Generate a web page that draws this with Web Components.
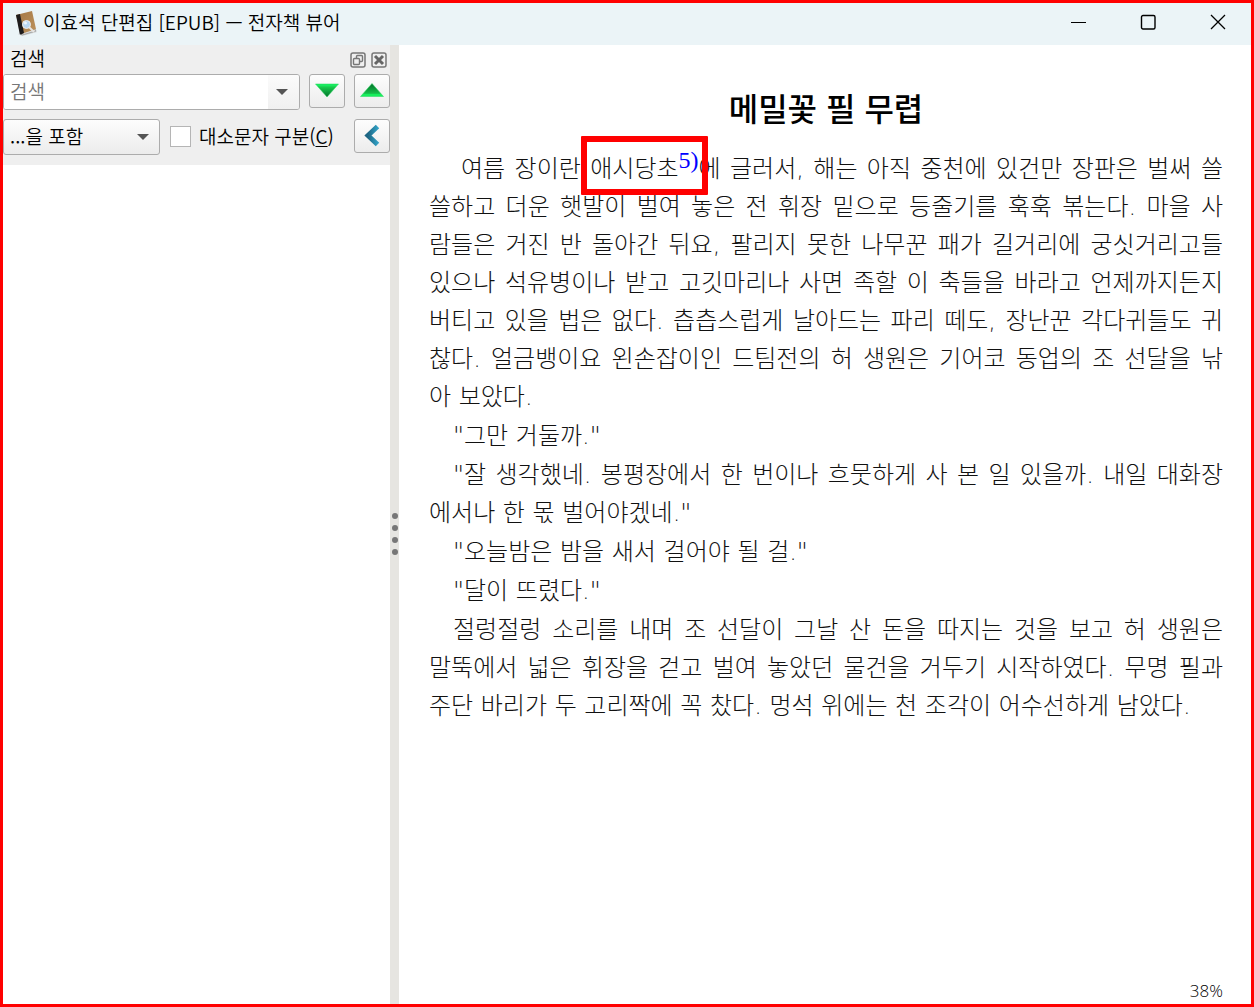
<!DOCTYPE html>
<html lang="ko">
<head>
<meta charset="utf-8">
<title>이효석 단편집 [EPUB] — 전자책 뷰어</title>
<style>
html,body{margin:0;height:100%}
body{font-family:"Open Sans","Noto Sans CJK KR",sans-serif;color:#000}
</style>
</head>
<body>
<viewer-window></viewer-window>
<script>
const define = (name, html) => customElements.define(name, class extends HTMLElement {
  constructor(){ super(); this.attachShadow({mode:'open'}).innerHTML = html; }
});

define('title-bar', `
<style>
:host{display:flex;align-items:center;height:42px;background:#ebf4f7;font:350 19px "Noto Sans CJK KR",sans-serif;padding-left:12px}
.icon{width:24px;height:26px;margin-right:4px}
h1{font:inherit;margin:0;flex:1;line-height:26px;padding-bottom:4px}
.caps{display:flex;padding-bottom:4px}
button{border:0;background:none;padding:0;width:70px;height:36px;display:grid;place-items:center}
.caps{margin-right:-2px}
.caps svg{width:16px;height:16px;fill:none;stroke:#000}
</style>
<svg class="icon" viewBox="0 0 24 26" aria-hidden="true">
<defs><linearGradient id="c" x1="0" y1="0" x2="1" y2="1"><stop offset="0" stop-color="#a47745"/><stop offset="1" stop-color="#bd935d"/></linearGradient></defs>
<path d="M3 23L20 19l2 2-15 4z" fill="#bbb" opacity=".6"/>
<path d="M5 22l15-4 1 2-14 4z" fill="#ddd" stroke="#777" stroke-width=".5"/>
<path d="M1 4L17 0l4 18-15 5z" fill="url(#c)"/>
<path d="M1 4l4-1 4 19-3 1.500q-1 .3-1.400-1z" fill="#1e1c1c"/>
<path d="M14 16l5 5" stroke="#e6e3df" stroke-width="2"/>
<circle cx="11.500" cy="13.500" r="4" fill="#b9d8f3" stroke="#eee" stroke-width="1"/>
<circle cx="10.500" cy="12" r="1.500" fill="#eef7ff"/>
</svg>
<h1><slot></slot></h1>
<div class="caps">
<button aria-label="최소화"><svg viewBox="0 0 16 16"><path d="M1 8.500h15"/></svg></button>
<button aria-label="최대화"><svg viewBox="0 0 16 16"><rect x="1.500" y="1.500" width="13.500" height="13.500" rx="1.500" stroke-width="1.400"/></svg></button>
<button aria-label="닫기"><svg viewBox="0 0 16 16"><path d="M1 1l14 14M15 1L1 15" stroke-width="1.300"/></svg></button>
</div>`);

define('tool-button', `
<style>
:host{display:block;width:36px;flex:none}
button{width:100%;height:34px;box-sizing:border-box;padding:0;border:1px solid #acacac;border-radius:3px;background:linear-gradient(#fdfdfd,#ececec);display:grid;place-items:center}
::slotted(svg){width:24px;height:24px;display:block}
</style><button><slot></slot></button>`);

define('search-panel', `
<style>
:host{display:flex;flex-direction:column;box-sizing:border-box;background:#efefef;font:350 19px "Noto Sans CJK KR",sans-serif}
header{display:flex;align-items:center;height:29px;padding:0 3px 0 7px;gap:5px}
h2{font:inherit;margin:0;flex:1;line-height:26px;padding-bottom:3px}
header button{width:16px;height:16px;padding:0;border:0;background:none}
header svg{display:block;width:16px;height:16px;fill:none;stroke:#777}
.row{display:flex;align-items:flex-start;gap:9px}
.combo{flex:1;min-width:0;display:flex;height:36px;box-sizing:border-box;border:1px solid #acacac;border-radius:3px;background:#f5f5f5;overflow:hidden}
.combo input{flex:1;min-width:0;border:0;background:#fff;padding:0 0 3px 6px;font:inherit;outline:0}
.combo input::placeholder{color:#777;opacity:1}
.combo button{width:31px;border:0;padding:0 4px 0 0;background:linear-gradient(#fbfbfb,#f0f0f0);display:grid;place-items:center}
.arrow{width:12px;height:6px;fill:#555}
.pick{display:grid;width:157px;height:36px}
.pick>*{grid-area:1/1}
select{appearance:none;font:inherit;color:#000;border:1px solid #acacac;border-radius:3px;padding:0 0 3px 6px;background:linear-gradient(#fdfdfd,#ececec);margin:0}
.pick svg{place-self:center end;margin-right:11px;pointer-events:none}
input[type=checkbox]{appearance:none;width:21px;height:21px;margin:7px 0 0;background:#fff;border:1px solid #b5b5b5;flex:none}
label{flex:1;line-height:33px;white-space:nowrap}
u{text-underline-offset:2px;text-decoration-thickness:1px}
.second{padding-top:9px;gap:10px}
.second label{margin-left:-2px}
.results{flex:1;background:#fff;margin-top:10px}
</style>
<header><h2>검색</h2>
<button aria-label="분리"><svg viewBox="0 0 16 16"><rect x="1" y="1" width="14" height="14" rx="2" stroke-width="1.500"/><rect x="6.500" y="3.500" width="6" height="6" rx="1" stroke-width="1.400"/><rect x="3.500" y="6.500" width="6" height="6" rx="1" fill="#efefef" stroke-width="1.400"/></svg></button>
<button aria-label="닫기"><svg viewBox="0 0 16 16"><rect x="1" y="1" width="14" height="14" rx="2" stroke-width="1.500"/><path d="M4 4l8 8M12 4l-8 8" stroke="#666" stroke-width="3"/></svg></button>
</header>
<div class="row">
<div class="combo"><input type="text" placeholder="검색" aria-label="검색"><button aria-label="검색 기록"><svg class="arrow" viewBox="0 0 12 6"><path d="M0 0h12L6 6z"/></svg></button></div>
<tool-button><svg viewBox="0 0 24 24"><defs><linearGradient id="dn" x1="0" y1="0" x2="0" y2="1"><stop offset=".1" stop-color="#18ee60"/><stop offset=".25" stop-color="#18c94c"/><stop offset="1" stop-color="#04702b"/></linearGradient></defs><path d="M0.500 5h23L12 18z" fill="url(#dn)" stroke="#27d75f" stroke-width=".5"/></svg></tool-button>
<tool-button><svg viewBox="0 0 24 24"><defs><linearGradient id="up" x1="0" y1="0" x2="0" y2="1"><stop offset="0" stop-color="#04702b"/><stop offset=".75" stop-color="#15bd48"/><stop offset=".85" stop-color="#16f05c"/></linearGradient></defs><path d="M0.500 17.500h23L12 4.500z" fill="url(#up)" stroke="#27d75f" stroke-width=".5"/></svg></tool-button>
</div>
<div class="row second">
<div class="pick"><select aria-label="검색 방식"><option>...을 포함</option></select><svg class="arrow" viewBox="0 0 12 6"><path d="M0 0h12L6 6z"/></svg></div>
<input type="checkbox" id="case"><label for="case">대소문자 구분(<u>C</u>)</label>
<tool-button><svg viewBox="0 0 24 24"><defs><linearGradient id="bk"><stop offset="0" stop-color="#1d6583"/><stop offset="1" stop-color="#319fc3"/></linearGradient></defs><path d="M17.500 2.500L8 11.500l9.500 9" fill="none" stroke="url(#bk)" stroke-width="5"/></svg></tool-button>
</div>
<div class="results"></div>`);

define('split-handle', `
<style>
:host{display:flex;flex-direction:column;align-items:center;justify-content:center;gap:6px;background:#e6e5e1;padding-top:18px;box-sizing:border-box}
i{width:6px;height:6px;border-radius:50%;background:#777}
</style><i></i><i></i><i></i><i></i>`);

define('book-paragraph', `
<style>
:host{display:block;text-indent:24px}
::slotted(span){display:block;text-align:justify;text-align-last:justify;text-justify:inter-word;white-space:nowrap}
::slotted(span:not(:first-child)){text-indent:0}
::slotted(span:last-child){text-align-last:left}
</style><slot></slot>`);

define('foot-note', `
<style>
:host{position:relative;text-indent:0}
:host::after{content:"";position:absolute;inset:-19px -9px -12px;border:6px solid #f00;border-radius:1px}
a{color:#00f;text-decoration:none;font-family:"Liberation Serif",serif;font-weight:400;position:relative;bottom:9px;line-height:0}
</style><slot></slot><a href="#note5">5)</a>`);

define('book-page', `
<style>
:host{display:flex;flex-direction:column;box-sizing:border-box;background:#fff;padding:38px 28px 0 30px}
h2{margin:0 0 19px;text-align:center;font:500 32px/48px "Noto Sans CJK KR",sans-serif}
article{flex:1;display:flex;flex-direction:column;gap:1px;color:#111;font:300 24px/38px "DejaVu Sans","Noto Sans CJK KR",sans-serif}
footer{text-align:right;font:300 17px/26px "Open Sans",sans-serif}
.wide{text-indent:32px}
</style>
<h2>메밀꽃 필 무렵</h2>
<article>
<book-paragraph class="wide"><span>여름 장이란 <foot-note>애시당초</foot-note>에 글러서, 해는 아직 중천에 있건만 장판은 벌써 쓸</span><span>쓸하고 더운 햇발이 벌여 놓은 전 휘장 밑으로 등줄기를 훅훅 볶는다. 마을 사</span><span>람들은 거진 반 돌아간 뒤요, 팔리지 못한 나무꾼 패가 길거리에 궁싯거리고들</span><span>있으나 석유병이나 받고 고깃마리나 사면 족할 이 축들을 바라고 언제까지든지</span><span>버티고 있을 법은 없다. 츱츱스럽게 날아드는 파리 떼도, 장난꾼 각다귀들도 귀</span><span>찮다. 얼금뱅이요 왼손잡이인 드팀전의 허 생원은 기어코 동업의 조 선달을 낚</span><span>아 보았다.</span></book-paragraph>
<book-paragraph><span>"그만 거둘까."</span></book-paragraph>
<book-paragraph><span>"잘 생각했네. 봉평장에서 한 번이나 흐뭇하게 사 본 일 있을까. 내일 대화장</span><span>에서나 한 몫 벌어야겠네."</span></book-paragraph>
<book-paragraph><span>"오늘밤은 밤을 새서 걸어야 될 걸."</span></book-paragraph>
<book-paragraph><span>"달이 뜨렸다."</span></book-paragraph>
<book-paragraph><span>절렁절렁 소리를 내며 조 선달이 그날 산 돈을 따지는 것을 보고 허 생원은</span><span>말뚝에서 넓은 휘장을 걷고 벌여 놓았던 물건을 거두기 시작하였다. 무명 필과</span><span>주단 바리가 두 고리짝에 꼭 찼다. 멍석 위에는 천 조각이 어수선하게 남았다.</span></book-paragraph>
</article>
<footer>38%</footer>`);

define('viewer-window', `
<style>
:host{display:flex;flex-direction:column;min-height:100vh;box-sizing:border-box;border:3px solid #f00;background:#fff}
main{flex:1;display:grid;grid-template-columns:387px 9px 1fr}
</style>
<title-bar>이효석 단편집 [EPUB] — 전자책 뷰어</title-bar>
<main><search-panel></search-panel><split-handle></split-handle><book-page></book-page></main>`);
</script>
</body>
</html>
